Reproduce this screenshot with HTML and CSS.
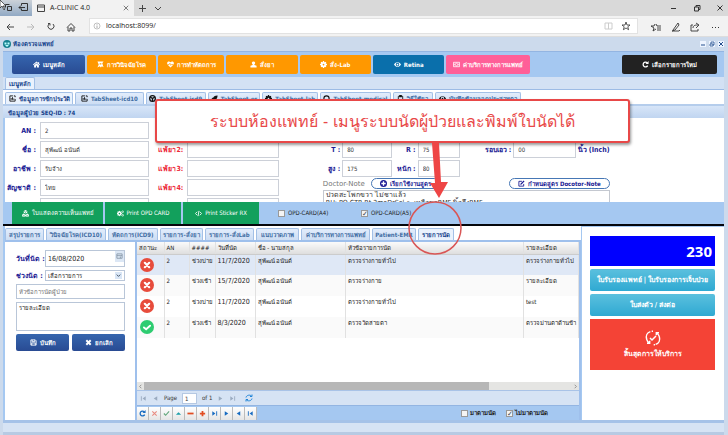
FILE: index.html
```html
<!DOCTYPE html>
<html lang="th">
<head>
<meta charset="utf-8">
<title>A-CLINIC 4.0</title>
<link rel="stylesheet" href="styles.css">
</head>
<body>
<svg class="defs" aria-hidden="true">
  <symbol id="home" viewBox="0 0 16 16"><path fill="currentColor" d="M8 1 0 8l1 1.500L8 4l7 5.500L16 8l-2-1.800V2h-2v2.500zM2.500 9.500V15H7v-4h2v4h4.500V9.500L8 5z"/></symbol>
  <symbol id="flag" viewBox="0 0 16 16"><path fill="currentColor" d="M1 1h14l-3 4 3 9-4-2-2 3-3-3-5 3 3-7zM6 5v3h4V5z" fill-rule="evenodd"/></symbol>
  <symbol id="heart" viewBox="0 0 16 16"><path fill="currentColor" d="M8 15 1 8C-2 2 5-1 8 3c3-4 10-1 7 5z"/><path d="M1 8h4l1.500-3 2 5L10 8h5" fill="none" stroke="#ff9800" stroke-width="1.500"/></symbol>
  <symbol id="user" viewBox="0 0 16 16"><path fill="currentColor" d="M8 1a3.500 3.500 0 0 1 2 6.500V9l5 2v4H1v-4l5-2V7.500A3.500 3.500 0 0 1 8 1z"/></symbol>
  <symbol id="gear" viewBox="0 0 16 16"><path fill="none" stroke="currentColor" stroke-width="4" d="M8 4a4 4 0 1 1 0 8 4 4 0 0 1 0-8z"/><path stroke="currentColor" stroke-width="3" d="M8 0v4m0 8v4M0 8h4m8 0h4M2.500 2.500l3 3m5 5 3 3m0-11-3 3m-5 5-3 3"/></symbol>
  <symbol id="gears" viewBox="0 0 16 16"><circle cx="5.500" cy="8" r="3.500" fill="none" stroke="currentColor" stroke-width="3"/><path stroke="currentColor" stroke-width="2" d="M5.500 2v3m0 6v3M0 8h3m5 0h3M1.500 4l2 2m4 4 2 2m0-8-2 2m-4 4-2 2"/><circle cx="13" cy="4" r="2" fill="none" stroke="currentColor" stroke-width="1.500"/><circle cx="13" cy="12" r="2" fill="none" stroke="currentColor" stroke-width="1.500"/></symbol>
  <symbol id="eye" viewBox="0 0 16 16"><path fill="currentColor" fill-rule="evenodd" d="M0 8c4-7 12-7 16 0-4 7-12 7-16 0zm8-4a4 4 0 1 0 0 8 4 4 0 0 0 0-8zm0 2a2 2 0 1 1 0 4 2 2 0 0 1 0-4z"/></symbol>
  <symbol id="money" viewBox="0 0 16 16"><path fill="none" stroke="currentColor" stroke-width="1.800" d="M1 3h14v10H1zM8 5a2.500 3 0 1 1 0 6 2.500 3 0 0 1 0-6zM3 6v4m10-4v4"/></symbol>
  <symbol id="refresh" viewBox="0 0 16 16"><path fill="none" stroke="currentColor" stroke-width="3" d="M13 10.500A5.500 5.500 0 1 1 12 4"/><path fill="currentColor" d="M15 0v7H8z"/></symbol>
  <symbol id="chart" viewBox="0 0 16 16"><path fill="none" stroke="currentColor" stroke-width="2" d="M9 2H2v12h12V9M5 11V7m3 4V5m3 6V8m0-6h3v3"/></symbol>
  <symbol id="wheel" viewBox="0 0 16 16"><circle cx="8" cy="8" r="6.500" fill="none" stroke="currentColor" stroke-width="3"/><path stroke="currentColor" stroke-width="3" d="M8 8 3 5m5 3 5-3M8 8v6"/></symbol>
  <symbol id="ring" viewBox="0 0 16 16"><circle cx="8" cy="8" r="6" fill="none" stroke="currentColor" stroke-width="2.500"/></symbol>
  <symbol id="clip" viewBox="0 0 16 16"><path fill="none" stroke="currentColor" stroke-width="2" d="M3 3h10v12H3z"/><path fill="currentColor" d="M5 0h6v5H5z"/></symbol>
  <symbol id="rocket" viewBox="0 0 16 16"><path fill="currentColor" d="M15 1C8 1 6 4 5 6L1 7l2 2v3l3 2 3 2 1-5c3-2 5-5 5-10z"/></symbol>
  <symbol id="cubes" viewBox="0 0 16 16"><path fill="currentColor" d="m8 0 4 2v4L8 8 4 6V2zM4 8l4 2v4l-4 2-4-2v-4zm8 0 4 2v4l-4 2-4-2v-4z"/><path stroke="#12a05c" d="m4 2.500 4 2 4-2M8 4.500V8m-8 2.500 4 2 4-2 4 2 4-2M4 12.500V16m8-3.500V16" fill="none"/></symbol>
  <symbol id="code" viewBox="0 0 16 16"><path fill="none" stroke="currentColor" stroke-width="2" d="M5 4 1 8l4 4m6-8 4 4-4 4M9 2 7 14"/></symbol>
  <symbol id="edit" viewBox="0 0 16 16"><path fill="none" stroke="currentColor" stroke-width="2" d="M9 3H2v11h11V9"/><path fill="currentColor" d="m6 8 7-7 2 2-7 7-3 1z"/></symbol>
  <symbol id="save" viewBox="0 0 16 16"><path fill="none" stroke="currentColor" stroke-width="2" d="M2 2h10l2 2v10H2zM5 2v4h6V2M4 14V9h8v5"/></symbol>
  <symbol id="plus" viewBox="0 0 16 16"><circle cx="8" cy="8" r="8" fill="currentColor"/><path stroke="#fff" stroke-width="3" d="M8 3v10M3 8h10"/></symbol>
  <symbol id="first" viewBox="0 0 16 16"><path fill="currentColor" d="M2 3h2v10H2zm11 0v10L6 8z"/></symbol>
  <symbol id="prev" viewBox="0 0 16 16"><path fill="currentColor" d="M12 3v10L4 8z"/></symbol>
  <symbol id="next" viewBox="0 0 16 16"><path fill="currentColor" d="M4 3v10l8-5z"/></symbol>
  <symbol id="last" viewBox="0 0 16 16"><path fill="currentColor" d="M12 3h2v10h-2zM3 3v10l7-5z"/></symbol>
  <symbol id="cross" viewBox="0 0 16 16"><path stroke="currentColor" stroke-width="2.500" d="m3 3 10 10m0-10L3 13"/></symbol>
  <symbol id="times" viewBox="0 0 16 16"><path stroke="currentColor" stroke-width="4.500" d="m3 3 10 10m0-10L3 13"/></symbol>
  <symbol id="check" viewBox="0 0 16 16"><path fill="none" stroke="currentColor" stroke-width="2.500" d="m2 8 4 4 8-9"/></symbol>
  <symbol id="bad" viewBox="0 0 16 16"><circle cx="8" cy="8" r="8" fill="#e74c3c"/><path stroke="#fff" stroke-width="2.500" stroke-linecap="round" d="m5.500 5.500 5 5m0-5-5 5"/></symbol>
  <symbol id="good" viewBox="0 0 16 16"><circle cx="8" cy="8" r="8" fill="#2ecc71"/><path fill="none" stroke="#fff" stroke-width="2.200" stroke-linecap="round" d="m4.500 8.500 2.500 2 4.500-4"/></symbol>
  <symbol id="sync" viewBox="0 0 16 16"><path fill="none" stroke="currentColor" stroke-width="2" d="M2 7c1-5 8-6 11-3m1-3v4h-4m4 4c-1 5-8 6-11 3m-1 3v-4h4"/></symbol>
</svg>

<header class="browser">
  <div class="browser-tabs">
    <div class="tab-tools">
      <svg viewBox="0 0 32 16"><path fill="none" stroke="#333" d="M5.500 7.500v-3h4m-2 2h4v4h-4zM21.500 5.500v-2h6v7h-6v-2M19 7.500h6m-6 0 2-2m-2 2 2 2"/><path fill="#fff" stroke="#222" stroke-width=".7" d="M0 0v8l2-2 2 4 1-1-2-3h3z"/></svg>
    </div>
    <div class="browser-tab">
      <svg class="i8" viewBox="0 0 8 8"><path fill="none" stroke="#444" d="M.5 1h7v6.500h-7zM.5 3h7"/></svg>
      <span>A-CLINIC 4.0</span>
      <svg class="i6 push" viewBox="0 0 8 8"><path stroke="#555" d="m1 1 6 6m0-6L1 7"/></svg>
    </div>
    <div class="tab-add"><svg viewBox="0 0 28 8"><path fill="none" stroke="#444" d="M4.500 1v7M1 4.500h7M17 3l3 3 3-3"/></svg></div>
    <div class="win-tools"><svg viewBox="0 0 54 8"><path fill="none" stroke="#333" d="M1 4.500h5M24.500 3v4h4V3zM26 3V1.500h4v4h-1M47.500 1.500l5 5m0-5-5 5"/></svg></div>
  </div>
  <div class="address-row">
    <div class="nav-tools">
      <svg viewBox="0 0 80 12"><g fill="none" stroke="#444"><path d="M7 6h7M7 6l3-3M7 6l3 3"/><path stroke="#bbb" d="M27 6h7m0 0-3-3m3 3-3 3"/><path d="M49 3a3 3 0 1 0 4 0m-5-.5h2v2M67 6.500l4-4 4 4M68 6v4h2V7h2v3h2V6"/></g></svg>
    </div>
    <label class="address"><svg class="i8" viewBox="0 0 8 8"><circle cx="4" cy="4" r="3" fill="none" stroke="#999" stroke-width=".6"/><path stroke="#888" stroke-width=".7" d="M4 2v.7M4 3.500V6"/></svg><input type="text" value="localhost:8099/" aria-label="URL">
      <svg class="fav" viewBox="0 0 28 10"><path fill="none" stroke="#ccc" d="M1 2h7v6H1zM4.500 2v6"/><path fill="none" stroke="#333" stroke-width=".8" d="m22 1 1 3h3L23.800 5.800l.8 2.900L22 7l-2.600 1.700.8-2.900L18 4h3z"/></svg></label>
    <div class="side-tools"><svg viewBox="0 0 80 12"><g fill="none" stroke="#333" stroke-width=".9"><path d="m10 3 1 2h4M9 3 8 5H5l3 2-1 3 3-2m1-1h4m-4 2h4M27 9l5-7 1 2-4 5-3 1h7l1-1M47 4h-2v6h7V8M47 7c0-3 3-3 5-3m-2-2 3 2-3 3"/></g><path fill="#333" d="M66 6h1v1h-1zm3 0h1v1h-1zm3 0h1v1h-1z"/></svg></div>
  </div>
</header>

<main class="app">
  <div class="titlebar">
    <svg class="i8" viewBox="0 0 8 8"><circle cx="4" cy="4" r="4" fill="#16808f"/><path fill="#bff" d="M1.500 2.500h2v2h-2zm3 0h2v2h-2zM2 5h4L4 7z"/></svg>
    <h1>ห้องตรวจแพทย์</h1>
    <div class="titlebar-tools"><button aria-label="ย่อ"><svg viewBox="0 0 6 6"><path stroke="#24508f" d="M1 4h4"/></svg></button><button aria-label="ขยาย"><svg viewBox="0 0 6 6"><path fill="none" stroke="#24508f" stroke-width=".8" d="M1 3h3v2H1zM2 3V1h3v3H4"/></svg></button><button aria-label="ปิด"><svg viewBox="0 0 6 6"><path stroke="#24508f" d="m1 1 4 4m0-4L1 5"/></svg></button></div>
  </div>

  <nav class="menu">
    <button class="navy"><svg><use href="#home"/></svg>เมนูหลัก</button>
    <button class="orange"><svg><use href="#flag"/></svg>การวินิจฉัยโรค</button>
    <button class="orange"><svg><use href="#heart"/></svg>การทำหัตถการ</button>
    <button class="orange"><svg><use href="#user"/></svg>สั่งยา</button>
    <button class="orange"><svg><use href="#gear"/></svg>สั่ง-Lab</button>
    <button class="blue"><svg><use href="#eye"/></svg>Retina</button>
    <button class="pink"><svg><use href="#money"/></svg>ค่าบริการทางการแพทย์</button>
    <button class="dark"><svg><use href="#refresh"/></svg>เลือกรายการใหม่</button>
  </nav>

  <div class="tabs tabs-main"><button class="active">เมนูหลัก</button></div>
  <div class="tabs tabs-sheet">
    <button class="active"><svg><use href="#chart"/></svg>ข้อมูลการซักประวัติ</button>
    <button><svg><use href="#chart"/></svg>TabSheet-icd10</button>
    <button><svg><use href="#wheel"/></svg>TabSheet-icd9</button>
    <button><svg><use href="#rocket"/></svg>TabSheet-er</button>
    <button><svg><use href="#gear"/></svg>TabSheet-lab</button>
    <button><svg><use href="#ring"/></svg>TabSheet-medical</button>
    <button><svg><use href="#clip"/></svg>วิธีใช้ยา</button>
    <button><svg><use href="#eye"/></svg>บันทึกข้อมูลจุดประสาทตา</button>
  </div>
  <h2 class="panel-title">ข้อมูลผู้ป่วย SEQ-ID : 74</h2>

  <section class="patient">
    <div class="person">
      <label for="an">AN :</label><input id="an" value="2">
      <label for="nm">ชื่อ :</label><input id="nm" value="สุพัฒน์ อนันต์">
      <label for="job">อาชีพ :</label><input id="job" value="รับจ้าง">
      <label for="nat">สัญชาติ :</label><input id="nat" value="ไทย">
      <span></span><input aria-label="เพิ่มเติม">
    </div>
    <div class="allergy">
      <label for="a1">แพ้ยา1:</label><input id="a1">
      <label for="a2">แพ้ยา2:</label><input id="a2">
      <label for="a3">แพ้ยา3:</label><input id="a3">
      <label for="a4">แพ้ยา4:</label><input id="a4">
      <span></span><input aria-label="แพ้ยา5">
    </div>
    <div class="exam">
      <div class="vitals">
        <label for="t">T :</label><input id="t" value="80">
        <label for="r">R :</label><input id="r" value="75">
        <label for="waist">รอบเอว :</label><input id="waist" value="00"><span>นิ้ว (Inch)</span>
        <label for="h">สูง :</label><input id="h" value="175">
        <label for="w">หนัก :</label><input id="w" value="80">
      </div>
      <div class="note-head">
        <label for="note">Doctor-Note</label>
        <button><svg><use href="#plus"/></svg>เรียกใช้งานสูตร</button>
        <button class="push"><svg><use href="#edit"/></svg>กำหนดสูตร Docotor-Note</button>
      </div>
      <textarea id="note">ปวดสะโพกขวา ไม่ชาแล้ว
RH: PO CTR Rt 2moDrSol-&gt; เหลือขาRMF นิ้วถึงRMF</textarea>
    </div>
  </section>

  <div class="print-bar">
    <button><svg><use href="#cubes"/></svg>ใบแสดงความเห็นแพทย์</button>
    <button><svg><use href="#gears"/></svg>Print OPD CARD</button>
    <button><svg><use href="#code"/></svg>Print Sticker RX</button>
    <label><input type="checkbox">OPD-CARD(A4)</label>
    <label><input type="checkbox" checked>OPD-CARD(A5)</label>
  </div>

  <div class="lower">
    <div class="work">
      <div class="tabs tabs-work">
        <button>สรุปรายการ</button><button>วินิจฉัยโรค(ICD10)</button><button>หัตถการ(ICD9)</button><button>รายการ-สั่งยา</button><button>รายการ-สั่งLab</button><button>แนบวาดภาพ</button><button>ค่าบริการทางการแพทย์</button><button>Patient-EMR</button><button class="active">รายการนัด</button>
      </div>
      <div class="work-body">
        <form class="appoint">
          <div class="field"><label for="date">วันที่นัด :</label><span class="date"><input id="date" value="16/08/2020"><button type="button" aria-label="ปฏิทิน"><svg viewBox="0 0 8 8"><path fill="none" stroke="#789" stroke-width=".8" d="M1 1h6v5H1zM1 3h6M5 4v2"/></svg></button></span></div>
          <div class="field"><label for="slot">ช่วงนัด :</label><span class="select"><select id="slot"><option>เลือกรายการ</option></select><svg viewBox="0 0 8 8"><path fill="none" stroke="#345" d="m2 3 2 2 2-2"/></svg></span></div>
          <input aria-label="หัวข้อ" placeholder="หัวข้อการนัดผู้ป่วย">
          <textarea aria-label="รายละเอียด">รายละเอียด</textarea>
          <div class="actions"><button type="button"><svg><use href="#save"/></svg>บันทึก</button><button type="button"><svg><use href="#times"/></svg>ยกเลิก</button></div>
        </form>
        <div class="records">
          <div class="table-wrap">
            <table>
              <colgroup><col class="c1"><col class="c2"><col class="c3"><col class="c4"><col class="c5"><col class="c6"><col class="c7"></colgroup>
              <thead><tr><th>สถานะ</th><th>AN</th><th>####</th><th>วันที่นัด</th><th>ชื่อ - นามสกุล</th><th>หัวข้อรายการนัด</th><th>รายละเอียด</th></tr></thead>
              <tbody>
                <tr class="selected"><td><svg><use href="#bad"/></svg></td><td>2</td><td>ช่วงบ่าย</td><td class="day">11/7/2020</td><td>สุพัฒน์ อนันต์</td><td>ตรวจร่างกายทั่วไป</td><td>ตรวจร่างกายทั่วไป</td></tr>
                <tr><td><svg><use href="#bad"/></svg></td><td>2</td><td>ช่วงเช้า</td><td class="day">15/7/2020</td><td>สุพัฒน์ อนันต์</td><td>ตรวจร่างกาย</td><td>รายละเอียด</td></tr>
                <tr><td><svg><use href="#bad"/></svg></td><td>2</td><td>ช่วงบ่าย</td><td class="day">11/7/2020</td><td>สุพัฒน์ อนันต์</td><td>ตรวจร่างกายทั่วไป</td><td>test</td></tr>
                <tr><td><svg><use href="#good"/></svg></td><td>2</td><td>ช่วงเช้า</td><td class="day">8/3/2020</td><td>สุพัฒน์ อนันต์</td><td>ตรวจวัดสายตา</td><td>ตรวจม่านตาด้านข้า</td></tr>
              </tbody>
            </table>
          </div>
          <div class="scroll"><svg viewBox="0 0 8 8"><path fill="none" stroke="#888" d="M5 2 3 4l2 2"/></svg><span class="thumb"></span><svg class="push" viewBox="0 0 8 8"><path fill="none" stroke="#888" d="m3 2 2 2-2 2"/></svg></div>
          <div class="pager">
            <button aria-label="หน้าแรก"><svg><use href="#first"/></svg></button><button aria-label="ก่อนหน้า"><svg><use href="#prev"/></svg></button>
            <label for="page">Page</label><input id="page" value="1"><span>of 1</span>
            <button aria-label="ถัดไป"><svg><use href="#next"/></svg></button><button aria-label="หน้าสุดท้าย"><svg><use href="#last"/></svg></button>
            <button class="sync" aria-label="โหลดใหม่"><svg><use href="#sync"/></svg></button>
          </div>
          <div class="navigator">
            <button aria-label="โหลด"><svg><use href="#refresh"/></svg></button><button class="soft-red" aria-label="ยกเลิก"><svg><use href="#cross"/></svg></button><button class="green" aria-label="ตกลง"><svg><use href="#check"/></svg></button><button class="teal" aria-label="แก้ไข"><svg viewBox="0 0 16 16"><path fill="currentColor" d="m2 11 6-6 6 6z"/></svg></button><button class="red" aria-label="ลบ"><svg viewBox="0 0 16 16"><path fill="currentColor" d="M1 6h14v4H1z"/></svg></button><button class="red" aria-label="เพิ่ม"><svg viewBox="0 0 16 16"><path fill="currentColor" d="M6 2h4v4h4v4h-4v4H6v-4H2V6h4z"/></svg></button><button aria-label="ท้าย"><svg><use href="#last"/></svg></button><button aria-label="หน้า"><svg><use href="#next"/></svg></button><button aria-label="หลัง"><svg><use href="#prev"/></svg></button><button aria-label="แรก"><svg><use href="#first"/></svg></button>
            <label class="push"><input type="checkbox">มาตามนัด</label>
            <label class="missed"><input type="checkbox" checked>ไม่มาตามนัด</label>
          </div>
        </div>
      </div>
    </div>
    <aside class="queue">
      <output>230</output>
      <button class="cyan">ใบรับรองแพทย์ | ใบรับรองการเจ็บป่วย</button>
      <button class="cyan">ใบส่งตัว / ส่งต่อ</button>
      <button class="finish"><svg viewBox="0 0 24 24"><path fill="none" stroke="#fff" stroke-width="2.200" d="M8 2.500C3 4 1 9 2.500 14c.5 2 2 4 4 5.500M3 20h4v-4M16 21.500c5-1.500 7-6.500 5.500-11.500-.5-2-2-4-4-5.500M21 4h-4v4M7.500 12l3 3 6-6M10 2h2m1 20h2"/></svg>สิ้นสุดการให้บริการ</button>
    </aside>
  </div>
  <footer class="status"></footer>
</main>

<div class="callout">ระบบห้องแพทย์ - เมนูระบบนัดผู้ป่วยและพิมพ์ใบนัดได้</div>
<svg class="pointer" viewBox="0 0 60 114"><path fill="#ee4545" d="M27 0h7l2 39h7l-9 16-9-15h5z"/><circle cx="30" cy="85" r="26" fill="none" stroke="#d95656" stroke-width="1.500"/></svg>
</body>
</html>
```
FILE: styles.css
```css
* { box-sizing: border-box; }
body {
  margin: 0;
  min-height: 100vh;
  display: flex;
  flex-direction: column;
  position: relative;
  overflow: hidden;
  background: #ccdaec;
  color: #222;
  font: 6px/10px "DejaVu Sans Condensed", "Noto Sans", sans-serif;
}
button, input, select, textarea {
  font: inherit;
  color: inherit;
  margin: 0;
  padding: 0;
  border: 0;
  border-radius: 0;
  background: none;
  min-width: 0;
  outline: 0;
}
button { display: flex; align-items: center; justify-content: center; gap: 3px; white-space: nowrap; overflow: hidden; }
textarea { resize: none; overflow: hidden; display: block; }
svg { display: block; width: 7px; height: 7px; flex: none; }
h1, h2 { margin: 0; font-size: 6px; line-height: 10px; color: #15428b; }
.defs { position: absolute; width: 0; height: 0; }
.push { margin-left: auto; }
.i8 { width: 8px; height: 8px; }
.i6 { width: 6px; height: 6px; }

/* Browser frame */
.browser-tabs { display: flex; height: 16px; background: #d9d9d9; }
.tab-tools { width: 32px; background: linear-gradient(#ccd2d8, #91a9c4); }
.tab-tools svg { width: 32px; height: 16px; }
.browser-tab { width: 102px; display: flex; align-items: center; gap: 5px; padding: 0 5px; background: #f2f2f2; font-family: "Open Sans", sans-serif; font-size: 7px; }
.tab-add { padding: 4px; }
.tab-add svg { width: 28px; height: 8px; }
.win-tools { margin-left: auto; padding: 4px; }
.win-tools svg { width: 54px; height: 8px; }
.address-row { display: flex; height: 21px; padding: 2px 0; background: #f2f2f2; border-bottom: 1px solid #ddd; }
.nav-tools { width: 89px; padding: 3px 0; }
.nav-tools svg, .side-tools svg { width: 80px; height: 12px; }
.address { flex: 1; display: flex; align-items: center; gap: 5px; padding: 0 5px 0 3px; background: #fff; border: 1px solid #e2e2e2; font-family: "Open Sans", sans-serif; font-size: 7px; }
.address input { flex: 1; }
.address .fav { width: 28px; height: 10px; }
.side-tools { width: 90px; padding: 3px 8px; }

/* Application window */
.app { flex: 1; display: flex; flex-direction: column; padding: 0 4px 0 3px; }
.titlebar { display: flex; align-items: center; gap: 2px; height: 14px; }
.titlebar-tools { margin-left: auto; display: flex; gap: 3px; }
.titlebar-tools button { width: 6px; height: 6px; background: #edf4ff; }
.titlebar-tools svg { width: 6px; height: 6px; }

.menu {
  display: grid;
  grid-template-columns: 73fr 68fr 66fr 71fr 71fr 71fr 83fr 88fr 94fr;
  gap: 2px;
  height: 26px;
  padding: 3px 7px 3px 9px;
  background: #a5c8f1;
  border-top: 1px solid #93b5e2;
}
.menu button { color: #fff; font-weight: bold; border-radius: 2px; }
.menu .navy, .actions button { background: linear-gradient(#3565ae, #294b93); }
.menu .orange { background: #ff9800; }
.menu .blue { background: #0a6fab; }
.menu .pink { background: #ff5f98; }
.menu .dark { grid-column: 9; background: #222; }

.tabs { display: grid; align-items: end; gap: 2px; padding: 0 2px; color: #416da3; font-weight: bold; }
.tabs button { height: 12px; border: 1px solid #a3c0e6; border-bottom: 0; border-radius: 2px 2px 0 0; background: linear-gradient(#e2edfc, #cdddf3); }
.tabs .active { color: #15428b; background: #eaf2fd; }
.tabs svg { color: #111; }
.tabs-main { grid-template-columns: 30px; height: 13px; background: #d3e1f4; border-bottom: 1px solid #9cbbe5; }
.tabs-sheet { grid-template-columns: 68fr 68fr 60fr 52fr 56fr 70fr 40fr 86fr 198fr; height: 14px; background: #fff; }
.panel-title { height: 14px; padding: 2px 5px; background: linear-gradient(#d7e5f8, #c0d5f0); border-top: 2px solid #b5cdec; }

.patient {
  display: grid;
  grid-template-columns: 144fr 129fr 330fr 114fr;
  height: 84px;
  padding-top: 4px;
  overflow: hidden;
  background: #fff;
  border-left: 2px solid #a5c8f1;
  color: #333;
}
.patient label, .vitals span { color: #1b1b94; font-weight: bold; font-size: 7px; text-align: right; white-space: nowrap; }
.patient input { width: 100%; height: 17px; padding: 0 4px; border: 1px solid #ccd0d8; }
.person, .allergy { display: grid; grid-auto-rows: 17px; gap: 2px 4px; align-items: center; }
.person { grid-template-columns: 31px 1fr; }
.allergy { grid-template-columns: 34px 1fr; }
.patient .allergy label { color: #ed2939; }
.exam { display: flex; flex-direction: column; }
.vitals { display: grid; grid-template-columns: 61fr 50fr 21fr 42fr 49fr 62fr 31fr; grid-auto-rows: 17px; gap: 2px 2px; align-items: center; padding-top: 19px; }
.note-head { display: flex; align-items: center; gap: 6px; height: 13px; margin-left: 44px; }
.patient .note-head label { color: #777; font-weight: normal; font-family: "DejaVu Sans", sans-serif; }
.note-head button { height: 11px; padding: 0 8px; border: 1px solid #4677b5; border-radius: 6px; color: #1b1b94; font-weight: bold; }
.exam textarea { flex: none; height: 30px; margin-left: 44px; padding: 0 2px; border: 1px solid #c4c8d0; line-height: 8px; font-size: 7px; }

.print-bar { display: flex; gap: 2px; height: 24px; padding-left: 9px; background: #a5c8f1; border-bottom: 2px solid #05070c; }
.print-bar button { flex: 0 0 76px; background: #12a05c; color: #fff; }
.print-bar button:first-child { flex-basis: 91px; }
.print-bar label { display: flex; align-items: center; gap: 3px; margin-left: 17px; flex: 0 0 64px; }
input[type="checkbox"] { appearance: none; display: grid; place-items: center; width: 7px; height: 7px; border: 1px solid #999; background: #f4f4f4; flex: none; }
input[type="checkbox"]:checked::before { content: "✓"; font: bold 7px/6px "DejaVu Sans", sans-serif; color: #345; }

/* Appointment area */
.lower { flex: 1; display: grid; grid-template-columns: 578fr 143fr; min-height: 0; }
.work { display: flex; flex-direction: column; min-width: 0; border-left: 2px solid #a5c8f1; }
.tabs-work { grid-template-columns: 39fr 60fr 50fr 43fr 49fr 43fr 69fr 44fr 36fr 125fr; gap: 2px; padding: 0; height: 16px; background: #fff; border-bottom: 2px solid #9fc0ec; }
.work-body { flex: 1; display: grid; grid-template-columns: 130fr 446fr; }
.appoint { display: flex; flex-direction: column; gap: 3px; padding: 8px 10px 0 11px; background: #fff; }
.field { display: grid; grid-template-columns: 26px 1fr; gap: 3px; align-items: center; }
.field label { color: #1b1b94; font-weight: bold; font-size: 7px; white-space: nowrap; text-align: right; }
.appoint input, .appoint textarea, .select { border: 1px solid #b9c6d8; padding: 0 2px; width: 100%; }
.date { display: flex; height: 17px; border: 1px solid #b9c6d8; font-size: 7px; }
.appoint .date input { border: 0; flex: 1; }
.date button { width: 9px; height: 11px; background: #dce7f5; }
.select { display: flex; height: 11px; align-items: center; }
.select select { appearance: none; flex: 1; }
.select svg { background: #d9e6f6; }
.appoint > input { height: 15px; }
.appoint > textarea { height: 29px; }
.actions { display: grid; grid-template-columns: 1fr 1fr; gap: 3px; }
.actions button { height: 17px; color: #fff; font-weight: bold; border-radius: 2px; }

.records { display: flex; flex-direction: column; min-width: 0; background: #fff; border: solid #9fc0ec; border-width: 0 2px; }
.table-wrap { flex: 1; overflow: hidden; }
table { width: 100%; border-collapse: collapse; table-layout: fixed; color: #222; }
.c1 { width: 27px; } .c2 { width: 25px; } .c3 { width: 26px; } .c4 { width: 40px; } .c5 { width: 20.5%; } .c6 { width: auto; } .c7 { width: 55px; }
th, td { padding: 0 2px; text-align: left; white-space: nowrap; overflow: hidden; border-right: 1px solid #e1e1e1; }
th { height: 12px; font-weight: normal; background: linear-gradient(#fafafa, #dedede); border-bottom: 1px solid #ccc; }
td { height: 21px; vertical-align: top; line-height: 12px; }
.day { font-size: 7px; }
td svg { width: 14px; height: 14px; margin: 3px 1px 0; }
tr:nth-child(even) td { background: #fafafa; }
tr.selected td { background: #dfe8f6; }
.scroll { display: flex; align-items: center; height: 8px; background: #e5e5e3; }
.thumb { width: 78%; height: 8px; background: #b7b7b7; }
.pager { display: flex; align-items: center; gap: 5px; height: 15px; padding: 0 3px; background: #d6e3f4; border-top: 1px solid #a9c3e7; color: #333; }
.pager button { color: #9aabc0; }
.pager input { width: 15px; height: 11px; padding: 0 2px; background: #fff; border: 1px solid #b5c8e2; }
.pager .sync { color: #2185d8; margin-left: 4px; }
.sync svg { width: 8px; height: 8px; }
.navigator { display: flex; align-items: center; height: 15px; background: #a5c8f1; border-top: 1px solid #93b5e2; }
.navigator button { width: 12px; height: 13px; border-right: 1px solid #bbb; background: linear-gradient(#fff, #e5e5e5); color: #176bc1; }
.navigator .soft-red { color: #e88b80; }
.navigator .green { color: #62a77c; }
.navigator .teal { color: #1c9faa; }
.navigator .red { color: #e14d22; }
.navigator label { display: flex; align-items: center; gap: 2px; font-weight: bold; }
.navigator .missed { margin: 0 31px 0 10px; }

.queue { display: flex; flex-direction: column; gap: 3px; padding: 9px 9px 0 8px; background: #fff; border: solid #a5c8f1; border-width: 1px 0 0 1px; font-size: 7px; }
.queue output { height: 30px; padding-right: 3px; background: #00f; color: #fff; text-align: right; font: bold 15px/30px "Open Sans", sans-serif; }
.queue button { color: #fff; font-weight: bold; }
.queue .cyan { height: 22px; border-radius: 2px; background: linear-gradient(#5bc0de, #2fa9d2); }
.queue .finish { flex-direction: column; height: 51px; background: #f44336; }
.finish svg { width: 16px; height: 16px; }
.status { height: 15px; background: #d6e3f4; border-top: 3px solid #a5c2e8; border-bottom: 3px solid #b7cae3; }

/* Annotation over the window */
.callout {
  position: absolute;
  top: 99px;
  left: 155px;
  right: 98px;
  height: 44px;
  border: 2px solid #e84848;
  border-radius: 3px;
  background: #fff;
  color: #e84848;
  text-align: center;
  white-space: nowrap;
  font-size: 16px;
  line-height: 42px;
  box-shadow: 1px 2px 3px #0006;
}
.pointer { position: absolute; left: 405px; top: 143px; width: 60px; height: 114px; }
```
